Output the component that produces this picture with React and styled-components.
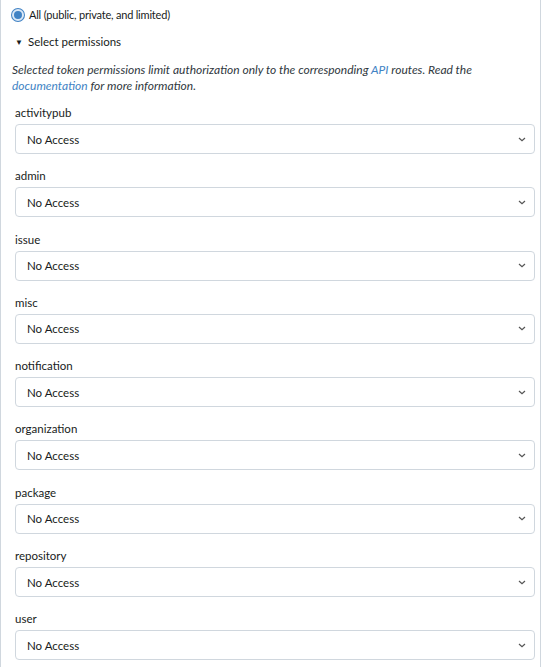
import React from 'react';
import styled, { createGlobalStyle } from 'styled-components';

const GlobalStyle = createGlobalStyle`
  html, body {
    margin: 0;
    padding: 0;
    background: #ffffff;
  }
  body {
    font-family: 'Lato', 'Noto Sans', sans-serif;
    color: #181c21;
    font-size: 12px;
  }
`;

// Form segment (borders run off the top of the page)
const Segment = styled.div`
  border-left: 1px solid #d0d7de;
  border-right: 1px solid #d0d7de;
  padding: 7px 5px 8px 11px;
  min-height: 667px;
  box-sizing: border-box;
`;

const RadioRow = styled.label`
  display: flex;
  align-items: center;
  gap: 5px;
  height: 16px;
  line-height: 16px;
  font-size: 11px;
  letter-spacing: -0.2px;
`;

const RadioDot = styled.span`
  width: 12px;
  height: 12px;
  border-radius: 50%;
  box-sizing: border-box;
  background: #4183c4;
  border: 2.5px solid #dbe8f6;
  box-shadow: 0 0 0 1px #4183c4;
`;

const Summary = styled.div`
  display: flex;
  align-items: center;
  gap: 5px;
  margin: 11px 0 0 3px;
  height: 16px;
  line-height: 16px;
  font-size: 11.5px;
`;

const Caret = styled.span`
  font-size: 8px;
`;

const Help = styled.p`
  font-style: italic;
  font-size: 12px;
  line-height: 16px;
  margin: 12px 0 11px;
  color: #303840;
`;

const Link = styled.a`
  color: #4183c4;
  text-decoration: none;
`;

const Fields = styled.div`
  display: flex;
  flex-direction: column;
  gap: 14.3px;
  margin-left: 3px;
`;

const Field = styled.div`
  display: flex;
  flex-direction: column;
  gap: 3px;
`;

const Label = styled.label`
  line-height: 16px;
  font-size: 11.5px;
`;

const SelectBox = styled.div`
  height: 30px;
  box-sizing: border-box;
  border: 1px solid #d0d7de;
  border-radius: 4px;
  display: flex;
  align-items: center;
  justify-content: space-between;
  padding: 0 8px 0 11px;
  font-size: 11.5px;
`;

const Chevron = () => (
  <svg width="8" height="5" viewBox="0 0 8 5">
    <path d="M1 1 L4 3.8 L7 1" fill="none" stroke="#555" strokeWidth="1.2" />
  </svg>
);

const scopes = [
  'activitypub',
  'admin',
  'issue',
  'misc',
  'notification',
  'organization',
  'package',
  'repository',
  'user',
];

const App = () => (
  <>
    <GlobalStyle />
    <Segment>
      <RadioRow>
        <RadioDot />
        All (public, private, and limited)
      </RadioRow>
      <Summary>
        <Caret>▼</Caret>
        Select permissions
      </Summary>
      <Help>
        Selected token permissions limit authorization only to the corresponding{' '}
        <Link href="#">API</Link> routes. Read the <Link href="#">documentation</Link> for more
        information.
      </Help>
      <Fields>
        {scopes.map((s) => (
          <Field key={s}>
            <Label>{s}</Label>
            <SelectBox>
              No Access
              <Chevron />
            </SelectBox>
          </Field>
        ))}
      </Fields>
    </Segment>
  </>
);

export default App;
